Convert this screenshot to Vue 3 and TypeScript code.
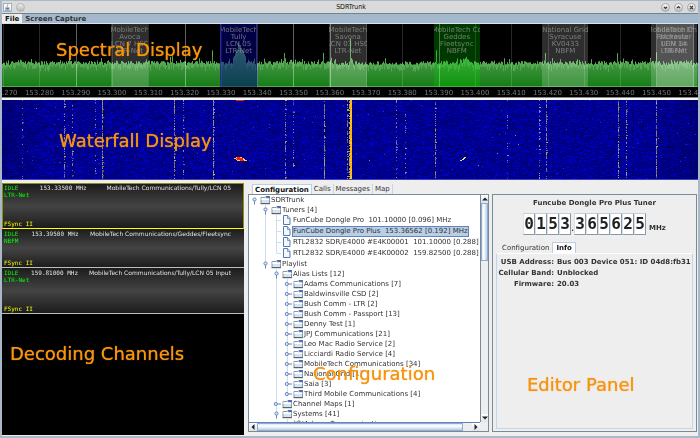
<script setup lang="ts">
import { onBeforeUnmount, onMounted, ref } from 'vue'

interface Marker {
  from: number
  to: number
  tone: 'grey' | 'blue' | 'green'
  lines: string[]
}

interface TreeRow {
  depth: number
  label: string
  kind: 'open' | 'closed' | 'leaf' | 'system'
  guides: number[]
  last?: boolean
  selected?: boolean
}

const startMHz = 153.2697
const spanMHz = 0.19175

function percent(mhz: number): string {
  return ((mhz - startMHz) / spanMHz) * 100 + '%'
}

const ticks = Array.from({ length: 20 }, (_, i) => {
  const mhz = 153.27 + i * 0.01
  return { mhz, label: mhz.toFixed(3), bright: [2, 5, 8, 9, 12, 19].includes(i) }
})

const markers: Marker[] = [
  { from: 153.2998, to: 153.31, tone: 'grey', lines: ['MobileTech', 'Avoca', 'LCN 7 HSC', 'LTR-Net'] },
  { from: 153.3298, to: 153.34, tone: 'blue', lines: ['MobileTech', 'Tully', 'LCN 05', 'LTR-Net'] },
  { from: 153.3598, to: 153.3702, tone: 'grey', lines: ['MobileTech', 'Savona', 'LCN 03 HSC', 'LTR-Net'] },
  { from: 153.3887, to: 153.4013, tone: 'green', lines: ['MobileTech Co', 'Geddes', 'Fleetsync', 'NBFM'] },
  { from: 153.4186, to: 153.4312, tone: 'grey', lines: ['National Grid', 'Syracuse', 'KV0433', 'NBFM'] },
  { from: 153.4485, to: 153.4612, tone: 'grey', lines: ['MobileTech Cho', 'Rochester', 'LCN 14', 'LTR-Net'] },
  { from: 153.4498, to: 153.46, tone: 'grey', lines: ['MidState Eh', 'Moravia', 'UHM 8n', 'NBFM'] },
]

const channels = [
  { state: 'IDLE', decoder: 'LTR-Net', freq: '153.33500 MHz', name: 'MobileTech Communications/Tully/LCN 05', tall: true, selected: true },
  { state: 'IDLE', decoder: 'NBFM', freq: '153.39500 MHz', name: 'MobileTech Communications/Geddes/Fleetsync', tall: false, selected: false },
  { state: 'IDLE', decoder: 'LTR-Net', freq: '159.81000 MHz', name: 'MobileTech Communications/Tully/LCN 05 Input', tall: true, selected: false },
]

const aliasLists = [
  'Adams Communications [7]',
  'Baldwinsville CSD [2]',
  'Bush Comm - LTR [2]',
  'Bush Comm - Passport [13]',
  'Denny Test [1]',
  'JPJ Communications [21]',
  'Leo Mac Radio Service [2]',
  'Licciardi Radio Service [4]',
  'MobileTech Communications [34]',
  'National Grid [1]',
  'Saia [3]',
  'Third Mobile Communications [4]',
]

const rows: TreeRow[] = [
  { depth: 0, label: 'SDRTrunk', kind: 'open', guides: [], last: true },
  { depth: 1, label: 'Tuners [4]', kind: 'open', guides: [] },
  { depth: 2, label: 'FunCube Dongle Pro  101.10000 [0.096] MHz', kind: 'leaf', guides: [1] },
  { depth: 2, label: 'FunCube Dongle Pro Plus  153.36562 [0.192] MHz', kind: 'leaf', guides: [1], selected: true },
  { depth: 2, label: 'RTL2832 SDR/E4000 #E4K00001  101.10000 [0.288] MHz', kind: 'leaf', guides: [1] },
  { depth: 2, label: 'RTL2832 SDR/E4000 #E4K00002  159.82500 [0.288] MHz', kind: 'leaf', guides: [1], last: true },
  { depth: 1, label: 'Playlist', kind: 'open', guides: [], last: true },
  { depth: 2, label: 'Alias Lists [12]', kind: 'open', guides: [] },
  ...aliasLists.map((label, i): TreeRow => ({
    depth: 3,
    label,
    kind: 'closed',
    guides: [2],
    last: i === aliasLists.length - 1,
  })),
  { depth: 2, label: 'Channel Maps [1]', kind: 'closed', guides: [] },
  { depth: 2, label: 'Systems [41]', kind: 'open', guides: [], last: true },
  { depth: 3, label: 'Adams Communications', kind: 'system', guides: [] },
]

const digits = '0153.365625'.split('')

const info = [
  { label: 'USB Address:', value: 'Bus 003 Device 051: ID 04d8:fb31' },
  { label: 'Cellular Band:', value: 'Unblocked' },
  { label: 'Firmware:', value: '20.03' },
]

const mainTab = ref('Configuration')
const editorTab = ref('Info')
const spectrum = ref<HTMLCanvasElement | null>(null)
const waterfall = ref<HTMLCanvasElement | null>(null)

function randomSource(seed: number): () => number {
  let s = seed
  return () => {
    s = (s * 1664525 + 1013904223) % 4294967296
    return s / 4294967296
  }
}

function prepare(canvas: HTMLCanvasElement): CanvasRenderingContext2D | null {
  canvas.width = canvas.clientWidth
  canvas.height = canvas.clientHeight
  return canvas.getContext('2d')
}

// Carrier peaks as [position, height above the noise floor, half width], measured on a 696-unit span.
const peaks = [
  [237, 18, 7], [210, 12, 1], [282, 10, 1], [321, 11, 1], [348, 26, 1], [434, 8, 1],
  [615, 9, 1], [654, 10, 1], [543, 9, 1], [170, 5, 1], [288, 4, 1], [463, 5, 4],
]

function drawSpectrum(canvas: HTMLCanvasElement): void {
  const g = prepare(canvas)
  if (!g) return
  const random = randomSource(77)
  const { width: w, height: h } = canvas
  const fill = g.createLinearGradient(0, 12, 0, h)
  fill.addColorStop(0, '#62b562')
  fill.addColorStop(0.55, '#3f943f')
  fill.addColorStop(1, '#147d14')
  for (let x = 0; x < w; x++) {
    const u = (x / w) * 696
    let level = 22 + random() * 4
    if (random() > 0.85) level += random() * 4
    for (const [px, ph, pw] of peaks) {
      const d = Math.abs(u - px) / pw
      if (d < 1) level += ph * Math.pow(1 - d, 0.7)
    }
    g.fillStyle = fill
    g.fillRect(x, h - level, 1, level)
    g.fillStyle = '#55a955'
    const dip = 2 + random() * 5
    g.fillRect(x, h - level, 1, dip)
  }
  g.fillStyle = 'rgba(190, 225, 190, 0.4)'
  g.fillRect(0, h - 1, w, 1)
}

// Vertical traces as [position, brightness, warmth].
const traces = [
  [20, 0.12, 0], [62, 0.4, 0.4], [70, 0.28, 0.5], [93, 0.12, 0], [100, 0.72, 0.9], [172, 0.6, 0.6],
  [181, 0.28, 0.3], [211, 0.75, 0.4], [283, 0.35, 0.4], [291, 0.28, 0.2], [322, 0.7, 0.7], [345, 0.5, 0.8],
  [394, 0.25, 0.2], [403, 0.18, 0], [433, 0.6, 0.4], [505, 0.14, 0], [537, 0.25, 0.2], [544, 0.55, 0.5],
  [616, 0.6, 0.6], [624, 0.45, 0.5], [654, 0.75, 0.6],
]

function drawWaterfall(canvas: HTMLCanvasElement): void {
  const g = prepare(canvas)
  if (!g) return
  const random = randomSource(4211)
  const { width: w, height: h } = canvas
  const scale = w / 696
  g.fillStyle = '#00008c'
  g.fillRect(0, 0, w, h)
  for (let y = 0; y < h; y++) {
    let x = 0
    while (x < w) {
      const run = 1 + Math.floor(random() * 3)
      const edge = Math.min(1, 0.82 + Math.min(x, w - x) / (w * 0.35))
      const r = random()
      const blue = Math.round((r > 0.7 ? 165 + random() * 35 : 112 + random() * 38) * edge)
      g.fillStyle = `rgb(0, 0, ${blue})`
      g.fillRect(x, y, run, 1)
      if (random() > 0.996) {
        g.fillStyle = random() > 0.85 ? '#8c8c76' : '#2436c8'
        g.fillRect(x, y, 1, 1)
      }
      x += run
    }
  }
  for (const [pos, bright, warm] of traces) {
    for (let y = 0; y < h; y++) {
      if (random() > bright + 0.1) continue
      const v = Math.round(40 + bright * 50 + random() * 110)
      g.fillStyle = `rgb(${v}, ${v}, ${Math.round(190 - warm * 120)})`
      g.fillRect(Math.round(pos * scale), y, random() > 0.88 ? 2 : 1, 1)
    }
  }
  for (let y = 0; y < h; y++) {
    g.fillStyle = random() > 0.4 ? '#ffb400' : '#f7c81e'
    g.fillRect(Math.round(348 * scale), y, 2, 1)
    if (random() > 0.4) {
      g.fillStyle = '#b9a552'
      g.fillRect(Math.round(347 * scale), y, 1, 1)
    }
  }
  const bx = Math.round(234 * scale)
  g.fillStyle = '#ffd23c'
  g.fillRect(bx, 57, 6, 1)
  g.fillRect(bx - 2, 58, 10, 1)
  g.fillRect(bx, 59, 9, 1)
  g.fillRect(bx + 1, 60, 10, 1)
  g.fillStyle = '#ff2200'
  g.fillRect(bx, 0, 8, 1)
  g.fillRect(bx + 1, 57, 3, 1)
  g.fillRect(bx, 58, 7, 1)
  g.fillRect(bx + 1, 59, 6, 1)
  g.fillRect(bx + 4, 60, 4, 1)
  const sx = Math.round(459 * scale)
  g.fillStyle = '#e6e650'
  g.fillRect(sx - 1, 60, 2, 1)
  g.fillRect(sx + 1, 59, 2, 1)
  g.fillRect(sx + 2, 58, 2, 1)
  g.fillRect(sx + 3, 57, 2, 1)
  g.fillStyle = '#4242b8'
  g.fillRect(0, h - 1, w, 1)
}

function redraw(): void {
  if (spectrum.value) drawSpectrum(spectrum.value)
  if (waterfall.value) drawWaterfall(waterfall.value)
}

onMounted(() => {
  redraw()
  window.addEventListener('resize', redraw)
})
onBeforeUnmount(() => window.removeEventListener('resize', redraw))
</script>

<template>
  <div class="window">
    <header class="titlebar">
      <svg class="app-icon" viewBox="0 0 9 9" aria-hidden="true">
        <rect x="0.5" y="0.5" width="8" height="8" fill="#f4f6f8" stroke="#a5b0ba" />
        <path d="M4.6 1.2C5.6 2.2 3.4 2.700 4.5 4.2" fill="none" stroke="#d8743c" stroke-width="0.8" />
        <path d="M2.4 4.6h4v1.2q-2 1.2-4 0z" fill="#4f7fae" />
        <path d="M1.6 7.2h5.8" stroke="#4f7fae" stroke-width="0.9" />
      </svg>
      <button class="knob plain" type="button" aria-label="Window menu"></button>
      <h1 class="title">SDRTrunk</h1>
      <div class="window-buttons">
        <button class="knob" type="button" aria-label="Minimize">
          <svg viewBox="0 0 8 8"><path d="M2.2 3.2 4 5l1.8-1.8" /></svg>
        </button>
        <button class="knob" type="button" aria-label="Maximize">
          <svg viewBox="0 0 8 8"><path d="M2.2 4.8 4 3l1.8 1.8" /></svg>
        </button>
        <button class="knob" type="button" aria-label="Close">
          <svg viewBox="0 0 8 8"><path d="M2.2 2.2 5.8 5.8M5.8 2.2 2.2 5.8" /></svg>
        </button>
      </div>
    </header>

    <nav class="menubar">
      <button class="menu active" type="button">File</button>
      <button class="menu" type="button">Screen Capture</button>
    </nav>

    <section class="spectral">
      <div class="plot">
        <canvas ref="spectrum" class="fill-canvas"></canvas>
        <span
          v-for="tick in ticks"
          :key="'line' + tick.label"
          class="grid-line"
          :class="{ bright: tick.bright }"
          :style="{ left: percent(tick.mhz) }"
        ></span>
        <div
          v-for="(marker, i) in markers"
          :key="i"
          class="marker"
          :class="marker.tone"
          :style="{ left: percent(marker.from), width: ((marker.to - marker.from) / spanMHz) * 100 + '%' }"
        >
          <span v-for="line in marker.lines" :key="line" class="marker-line">{{ line }}</span>
        </div>
      </div>
      <div class="scale">
        <span v-for="tick in ticks" :key="tick.label" class="tick" :style="{ left: percent(tick.mhz) }">{{ tick.label }}</span>
      </div>
      <strong class="callout at-spectral">Spectral Display</strong>
    </section>

    <section class="waterfall">
      <canvas ref="waterfall" class="fill-canvas"></canvas>
      <strong class="callout at-waterfall">Waterfall Display</strong>
    </section>

    <main class="workspace">
      <section class="channels">
        <article
          v-for="channel in channels"
          :key="channel.name"
          class="channel"
          :class="{ tall: channel.tall, selected: channel.selected }"
        >
          <div class="channel-top">
            <span class="state">{{ channel.state }}</span>
            <span class="channel-freq">{{ channel.freq }}</span>
            <span class="channel-name">{{ channel.name }}</span>
          </div>
          <span class="state">{{ channel.decoder }}</span>
          <span class="aux">FSync II</span>
        </article>
        <strong class="callout at-channels">Decoding Channels</strong>
      </section>

      <section class="right">
        <div class="tabs main-tabs" role="tablist">
          <button
            v-for="name in ['Configuration', 'Calls', 'Messages', 'Map']"
            :key="name"
            class="tab"
            :class="{ current: mainTab === name }"
            type="button"
            role="tab"
            :aria-selected="mainTab === name"
            @click="mainTab = name"
          >{{ name }}</button>
        </div>
        <div class="split">
          <div class="tree-panel">
            <ul class="tree">
              <li v-for="row in rows" :key="row.depth + row.label" class="row" :class="row.kind">
                <span
                  v-for="level in row.depth"
                  :key="level"
                  class="cell"
                  :class="{ line: row.guides.includes(level - 1) }"
                ></span>
                <span class="cell" :class="{ line: !row.last, half: row.last && row.depth > 0 }">
                  <svg v-if="row.kind === 'open'" class="handle" viewBox="0 0 11 10" aria-hidden="true">
                    <path d="M5.5 5v4.5" /><circle cx="5.5" cy="4.5" r="1.6" />
                  </svg>
                  <svg v-else-if="row.kind === 'leaf'" class="handle stub" viewBox="0 0 11 10" aria-hidden="true">
                    <path d="M5.5 5.5H10" />
                  </svg>
                  <svg v-else class="handle" viewBox="0 0 11 10" aria-hidden="true">
                    <path d="M5 5h5" /><circle cx="4.8" cy="5" r="1.6" />
                  </svg>
                </span>
                <svg v-if="row.kind === 'leaf'" class="icon" viewBox="0 0 11 10" aria-hidden="true">
                  <path d="M1.5.5h4l2.5 3v6H1.5z" fill="#f3f8fd" stroke="#5478b0" />
                  <path d="M5.5.5v3H8" fill="#c9dcef" stroke="#5478b0" stroke-width="0.7" />
                </svg>
                <svg v-else-if="row.kind === 'system'" class="icon" viewBox="0 0 11 10" aria-hidden="true">
                  <path d="M1 1.5 3 4 1 6.5M4 2l1.5 4L7 2.5 8.5 6l1.5-4M6 1v8" fill="none" stroke="#555" stroke-width="0.8" />
                </svg>
                <svg v-else class="icon" viewBox="0 0 11 10" aria-hidden="true">
                  <path d="M1 8.5V2.5h4L6 1.5h3.5v7z" fill="#d5e3f2" stroke="#758090" stroke-width="0.8" />
                  <path d="M1.4 3h4l.6 1h3.2v1H1.4z" fill="#fff" />
                  <path d="M5.5 1H9.9v2H6.5z" fill="#4c6fb0" />
                  <path d="M.6 8.7h9.3" stroke="#4c5460" />
                </svg>
                <span class="label" :class="{ picked: row.selected }">{{ row.label }}</span>
              </li>
            </ul>
            <div class="bar vertical">
              <button class="arrow" type="button" aria-label="Scroll up"><svg viewBox="0 0 6 6"><path d="M0 4.5 3 1.5 6 4.5z" /></svg></button>
              <span class="thumb"></span>
              <span class="track"></span>
              <button class="arrow" type="button" aria-label="Scroll down"><svg viewBox="0 0 6 6"><path d="M0 1.5 3 4.5 6 1.5z" /></svg></button>
            </div>
            <div class="bar horizontal">
              <button class="arrow" type="button" aria-label="Scroll left"><svg viewBox="0 0 6 6"><path d="M4.5 0 1.5 3 4.5 6z" /></svg></button>
              <span class="thumb"></span>
              <span class="track"></span>
              <button class="arrow" type="button" aria-label="Scroll right"><svg viewBox="0 0 6 6"><path d="M1.5 0 4.5 3 1.5 6z" /></svg></button>
            </div>
            <strong class="callout at-tree">Configuration</strong>
          </div>

          <div class="editor">
            <h2 class="tuner">Funcube Dongle Pro Plus Tuner</h2>
            <div class="frequency">
              <span v-for="(digit, i) in digits" :key="i" :class="digit === '.' ? 'dot' : 'digit'">{{ digit }}</span>
              <span class="unit">MHz</span>
            </div>
            <div class="tabs editor-tabs" role="tablist">
              <button
                v-for="name in ['Configuration', 'Info']"
                :key="name"
                class="tab"
                :class="{ current: editorTab === name }"
                type="button"
                role="tab"
                :aria-selected="editorTab === name"
                @click="editorTab = name"
              >{{ name }}</button>
            </div>
            <dl class="info">
              <template v-for="item in info" :key="item.label">
                <dt>{{ item.label }}</dt>
                <dd>{{ item.value }}</dd>
              </template>
            </dl>
            <strong class="callout at-editor">Editor Panel</strong>
          </div>
        </div>
      </section>
    </main>
  </div>
</template>

<style>
html,
body {
  margin: 0;
  background: #eee;
}
</style>

<style scoped>
.window {
  box-sizing: border-box;
  display: flex;
  flex-direction: column;
  height: 100vh;
  overflow: hidden;
  border: solid #a9b9c8;
  border-width: 1px 2px 2px;
  background: #eee;
  color: #333;
  font: 7px/10px "DejaVu Sans", sans-serif;
}

button {
  margin: 0;
  padding: 0;
  border: 0;
  background: none;
  color: inherit;
  font: inherit;
}

.titlebar {
  display: flex;
  flex: none;
  align-items: center;
  gap: 4px;
  height: 12px;
  padding: 0 2px 0 1px;
  border-bottom: 1px solid #74818e;
  background: #dadada;
}

.app-icon {
  width: 9px;
  height: 9px;
}

.title {
  flex: 1;
  margin: 0 0 0 16px;
  color: #111;
  font: 7px/12px "DejaVu Sans Condensed", "DejaVu Sans", sans-serif;
  text-align: center;
}

.window-buttons {
  display: flex;
  gap: 4px;
}

.knob {
  width: 9px;
  height: 9px;
  border: 1px solid #a5a5a5;
  border-radius: 50%;
  background: linear-gradient(#fff, #bdbdbd);
}

.knob.plain {
  border-color: #b4b4b4;
  background: linear-gradient(#eee, #b4b4b4);
}

.knob svg {
  display: block;
  width: 7px;
  height: 7px;
  fill: none;
  stroke: #333;
  stroke-width: 1.3;
}

.menubar {
  display: flex;
  flex: none;
  height: 9px;
  border-bottom: 1px solid #dbe2ea;
  background: #a3b8cc;
}

.menu {
  padding: 0 3px;
  color: #333;
  font-weight: bold;
  line-height: 10px;
}

.menu.active {
  background: #eee;
  color: #111;
}

.spectral {
  position: relative;
  flex: none;
  overflow: hidden;
  border-bottom: 1px solid #8b8b8b;
  background: #000;
}

.plot {
  position: relative;
  height: 63px;
}

.fill-canvas {
  display: block;
  width: 100%;
  height: 100%;
}

.grid-line {
  position: absolute;
  top: 0;
  bottom: 0;
  width: 1px;
  background: rgba(255, 255, 255, 0.15);
}

.grid-line.bright {
  background: rgba(255, 255, 255, 0.38);
}

.marker {
  position: absolute;
  top: 0;
  bottom: 0;
  box-sizing: border-box;
  display: flex;
  flex-direction: column;
  align-items: center;
  overflow: hidden;
  padding-top: 3px;
  color: rgba(160, 160, 160, 0.7);
  line-height: 7px;
  white-space: nowrap;
}

.marker.grey {
  background: rgba(255, 255, 255, 0.18);
}

.marker.blue {
  border-right: 1px solid #2828a0;
  border-left: 1px solid #2828a0;
  background: rgba(0, 0, 140, 0.48);
}

.marker.green {
  background: rgba(0, 210, 0, 0.27);
}

.marker-line {
  flex: none;
}

.scale {
  position: relative;
  height: 10px;
}

.tick {
  position: absolute;
  color: #777;
  line-height: 12px;
  transform: translateX(-50%);
}

.waterfall {
  position: relative;
  flex: none;
  height: 80px;
  border-top: 2px solid #f6f6f6;
}

.callout {
  position: absolute;
  color: #f7940f;
  font-size: 18px;
  font-weight: normal;
  line-height: 20px;
  text-shadow: 0 0 1px #f7940f;
  white-space: nowrap;
}

.at-spectral {
  top: 16px;
  left: 54px;
}

.at-waterfall {
  top: 31px;
  left: 57px;
}

.at-channels {
  top: 161px;
  left: 8px;
}

.at-tree {
  bottom: 47px;
  left: 64px;
}

.at-editor {
  bottom: 36px;
  left: 34px;
}

.workspace {
  display: grid;
  flex: 1;
  grid-template-columns: minmax(0, 242fr) minmax(0, 449fr);
  gap: 4px;
  min-height: 0;
  padding: 3px 1px 1px 0;
}

.channels {
  position: relative;
  overflow: hidden;
  background: #000;
}

.channel {
  box-sizing: border-box;
  display: flex;
  flex-direction: column;
  height: 39px;
  padding: 1px 2px;
  border-bottom: 1px solid #bdbdbd;
  background: linear-gradient(#1c1c1c, #444 50%, #1c1c1c);
  color: #e2e2e2;
  font: 6px/7px "DejaVu Sans Mono", monospace;
  white-space: nowrap;
}

.channel.tall {
  height: 46px;
}

.channel.selected {
  padding: 0 1px 1px;
  border: 1px solid #8f8f10;
  border-bottom-color: #ff0;
}

.channel-top {
  display: grid;
  grid-template-columns: 16px 1fr auto;
  padding-right: 11px;
}

.channel-freq {
  text-align: center;
}

.channel-name {
  font-family: "DejaVu Sans", sans-serif;
}

.state {
  color: #0f0;
}

.aux {
  margin-top: auto;
  color: #ff0;
}

.right {
  display: flex;
  flex-direction: column;
  min-width: 0;
  min-height: 0;
}

.tabs {
  display: flex;
  flex: none;
  align-items: flex-end;
}

.main-tabs {
  height: 11px;
  padding-left: 4px;
}

.tab {
  height: 10px;
  padding: 0 3px;
  border-right: 1px solid #c6d6e5;
  color: #333;
  line-height: 10px;
}

.main-tabs .tab {
  padding: 0 2px;
}

.tab.current {
  border: 1px solid #b8cfe5;
  border-bottom: 0;
  background: #fff;
  color: #111;
  font-weight: bold;
}

.split {
  display: grid;
  flex: 1;
  grid-template-columns: minmax(0, 241fr) minmax(0, 205fr);
  gap: 3px;
  min-height: 0;
  padding-bottom: 3px;
}

.tree-panel {
  position: relative;
  display: grid;
  grid-template-rows: minmax(0, 1fr) 9px;
  grid-template-columns: minmax(0, 1fr) 8px;
  min-height: 0;
  border: 1px solid #7a8a99;
  background: #eee;
}

.tree {
  margin: 0;
  padding: 0;
  overflow: hidden;
  background: #fff;
  list-style: none;
}

.row {
  display: flex;
  height: 10px;
  white-space: pre;
}

.row.leaf {
  height: 11px;
}

.cell {
  flex: none;
  width: 11px;
}

.cell.line {
  background: linear-gradient(90deg, transparent 5px, #cfdeed 5px, #cfdeed 6px, transparent 6px);
}

.cell.half {
  background: linear-gradient(90deg, transparent 5px, #cfdeed 5px, #cfdeed 6px, transparent 6px) no-repeat 0 0 / 11px 5px;
}

.handle {
  display: block;
  width: 11px;
  height: 10px;
  fill: #dfeaf6;
  stroke: #6382bf;
}

.handle.stub {
  stroke: #cfdeed;
}

.icon {
  flex: none;
  width: 11px;
  height: 10px;
}

.label {
  box-sizing: border-box;
  flex: none;
  line-height: 10px;
}

.label.picked {
  height: 11px;
  margin-left: -1px;
  border: 1px solid #6382bf;
  background: #b8cfe5;
  line-height: 9px;
}

.bar {
  display: flex;
  background: #eee;
}

.vertical {
  flex-direction: column;
  border-left: 1px solid #7a8a99;
}

.horizontal {
  grid-column: 1;
  border-top: 1px solid #6382bf;
}

.arrow {
  display: flex;
  flex: none;
  align-items: center;
  justify-content: center;
  width: 8px;
  height: 8px;
  background: linear-gradient(#fff, #dde4ea);
}

.arrow svg {
  width: 6px;
  height: 6px;
  fill: #222;
}

.thumb {
  box-sizing: border-box;
  border: 1px solid #8fabd0;
}

.vertical .thumb {
  flex: 57;
  background: linear-gradient(90deg, #dce8f4, #fff 35%, #b8cfe5);
}

.vertical .track {
  flex: 154;
}

.vertical .arrow {
  width: 7px;
}

.horizontal .thumb {
  flex: 206;
  background: linear-gradient(#dce8f4, #fff 35%, #b8cfe5);
}

.horizontal .track {
  flex: 9;
}

.editor {
  position: relative;
  display: flex;
  flex-direction: column;
  min-height: 0;
  border: 1px solid #7a8a99;
  padding: 2px 3px;
}

.tuner {
  margin: 0;
  font-size: 7px;
  line-height: 12px;
  text-align: center;
}

.frequency {
  display: flex;
  align-items: flex-end;
  justify-content: center;
  margin-top: 4px;
}

.digit {
  box-sizing: border-box;
  width: 12px;
  height: 22px;
  border: 1px solid #8a99a8;
  border-top-color: #c5d0da;
  border-left-color: #d8e0e8;
  background: #fff;
  color: #222;
  font: bold 16px/20px "DejaVu Sans Mono", monospace;
  text-align: center;
}

.dot {
  width: 3px;
  font-weight: bold;
  line-height: 12px;
  text-align: center;
}

.unit {
  padding-left: 3px;
  font-weight: bold;
  line-height: 14px;
}

.editor-tabs {
  margin-top: 7px;
  padding-left: 3px;
}

.editor-tabs .tab {
  height: 11px;
  border-right: 0;
}

.editor-tabs .tab.current {
  border-right: 1px solid #b8cfe5;
}

.info {
  display: grid;
  flex: 1;
  grid-template-columns: 56px minmax(0, 1fr);
  grid-auto-rows: 10px;
  gap: 1px 3px;
  align-content: start;
  margin: 0;
  padding: 3px 1px;
  border: 1px solid #c4d5e6;
  border-top-color: #fff;
  font-weight: bold;
  white-space: nowrap;
}

.info dt {
  text-align: right;
}

.info dd {
  margin: 0;
}
</style>
